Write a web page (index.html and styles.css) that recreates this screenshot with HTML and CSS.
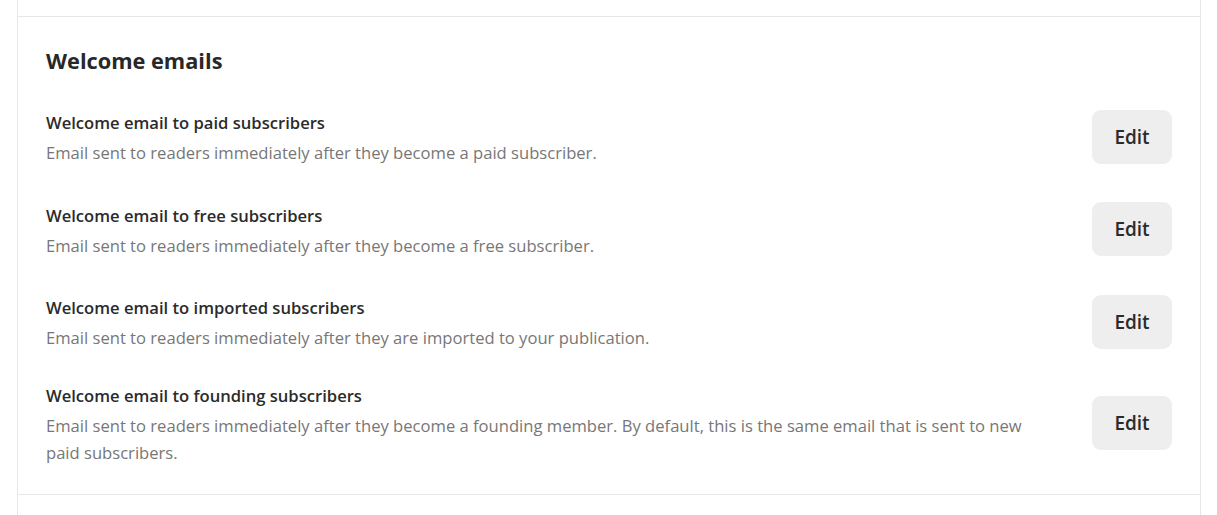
FILE: index.html
```html
<!DOCTYPE html>
<html>
<head>
<meta charset="utf-8">
<link rel="stylesheet" href="styles.css">
</head>
<body>
<div class="page">
  <div class="section section-prev"></div>
  <div class="section">
    <h2 class="heading">Welcome emails</h2>
    <div class="rows">
      <div class="row">
        <div class="text">
          <div class="title">Welcome email to paid subscribers</div>
          <div class="desc">Email sent to readers immediately after they become a paid subscriber.</div>
        </div>
        <button class="btn">Edit</button>
      </div>
      <div class="row">
        <div class="text">
          <div class="title">Welcome email to free subscribers</div>
          <div class="desc">Email sent to readers immediately after they become a free subscriber.</div>
        </div>
        <button class="btn">Edit</button>
      </div>
      <div class="row">
        <div class="text">
          <div class="title">Welcome email to imported subscribers</div>
          <div class="desc">Email sent to readers immediately after they are imported to your publication.</div>
        </div>
        <button class="btn">Edit</button>
      </div>
      <div class="row">
        <div class="text">
          <div class="title">Welcome email to founding subscribers</div>
          <div class="desc">Email sent to readers immediately after they become a founding member. By default, this is the same email that is sent to new paid subscribers.</div>
        </div>
        <button class="btn">Edit</button>
      </div>
    </div>
  </div>
  <div class="section section-next"></div>
</div>
</body>
</html>
```
FILE: styles.css
```css
html, body {
  margin: 0;
  padding: 0;
  background: #fff;
}
body {
  font-family: "Open Sans", "Noto Sans", sans-serif;
  color: #333;
}
.page {
  margin-left: 17px;
  width: 1184px;
  border-left: 1px solid #e6e6e6;
  border-right: 1px solid #e6e6e6;
  box-sizing: border-box;
}
.section {
  border-top: 1px solid #e6e6e6;
  padding: 30px 28px 28px 28px;
}
.section-prev {
  border-top: none;
  height: 16px;
  padding: 0;
}
.section-next {
  height: 40px;
  padding: 0;
}
.heading {
  margin: 0 0 27px 0;
  font-size: 21.75px;
  line-height: 28px;
  font-weight: 700;
  color: #282828;
}
.rows {
  display: flex;
  flex-direction: column;
  gap: 23.5px;
}
.row {
  display: flex;
  align-items: center;
  justify-content: space-between;
  min-height: 69px;
  gap: 40px;
}
.text {
  flex: 1;
  max-width: 1000px;
}
.title {
  font-size: 16.6px;
  line-height: 31px;
  font-weight: 600;
  color: #2b2b2b;
  margin-bottom: 1px;
}
.desc {
  font-size: 16.6px;
  line-height: 27px;
  color: #777;
}
.btn {
  flex: none;
  width: 80px;
  height: 54px;
  border: none;
  border-radius: 9px;
  background: #eeeeee;
  font-family: inherit;
  font-size: 19px;
  font-weight: 600;
  color: #2b2b2b;
  cursor: pointer;
}
```
